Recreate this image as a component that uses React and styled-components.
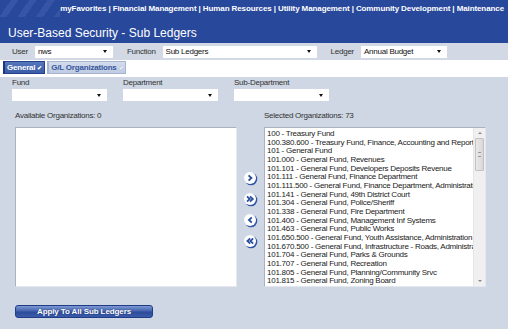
import React from 'react';
import styled, {createGlobalStyle} from 'styled-components';

const GlobalStyle = createGlobalStyle`
    body {
        margin: 0;
        font-family: "Liberation Sans", Arial, sans-serif;
    }
`

const Page = styled.div`
    width: 508px;
    height: 329px;
    display: flex;
    flex-direction: column;
    overflow: hidden;
    background: #ced7e3;
`

const Header = styled.div`
    background: #28489b;
    height: 43px;
    display: flex;
    flex-direction: column;
`

const MenuBar = styled.div`
    height: 17px;
    display: flex;
    align-items: center;
`

const Stripes = styled.div`
    width: 64px;
    height: 100%;
    background: repeating-linear-gradient(125deg, #28489b 0 9px, #3655a7 9px 15px);
`

const MenuText = styled.div`
    flex: 1;
    text-align: right;
    padding-right: 4px;
    color: white;
    font-weight: bold;
    font-size: 8px;
    letter-spacing: -0.1px;
    white-space: nowrap;
`

const Title = styled.div`
    flex: 1;
    display: flex;
    align-items: center;
    padding: 5px 0 0 8px;
    color: white;
    font-size: 12px;
`

const FilterRow = styled.div`
    height: 17px;
    background: #d2d9e4;
    display: flex;
    align-items: center;
    padding-left: 12px;
    gap: 14px;
`

const FilterGroup = styled.div`
    display: flex;
    align-items: center;
    gap: 7px;
`

const Label = styled.div`
    font-size: 8px;
    letter-spacing: -0.25px;
    color: #333;
    line-height: 10px;
    white-space: nowrap;
`

const Select = styled.div`
    width: ${p => p.w}px;
    height: 12px;
    background: white;
    box-sizing: border-box;
    display: flex;
    align-items: center;
    padding: 0 6px 0 3px;
    font-size: 8px;
    letter-spacing: -0.25px;
    color: #111;
    &::after {
        content: '';
        margin-left: auto;
        border-left: 2.5px solid transparent;
        border-right: 2.5px solid transparent;
        border-top: 3px solid #111;
    }
`

const TabRow = styled.div`
    height: 17px;
    background: white;
    display: flex;
    align-items: flex-start;
    padding: 1px 0 0 3px;
    box-sizing: border-box;
    gap: 2px;
`

const Tab = styled.div`
    height: 13px;
    box-sizing: border-box;
    display: flex;
    align-items: center;
    padding: 0 2px 0 2px;
    font-size: 8px;
    font-weight: bold;
    letter-spacing: -0.2px;
    white-space: nowrap;
    border: 1px solid ${p => p.active ? '#24418b' : '#a6b5d2'};
    border-left: 2px solid ${p => p.active ? '#1d3677' : '#a6b5d2'};
    color: ${p => p.active ? 'white' : '#36569c'};
    background: ${p => p.active
        ? 'linear-gradient(#5677bb, #3a5ba6)'
        : 'linear-gradient(#d3dcec, #bfcbe2)'};
`

const Check = styled.span`
    margin-left: 2px;
    font-size: 6px;
    color: ${p => p.active ? 'white' : '#f4f6fb'};
    text-shadow: ${p => p.active ? 'none' : '0 0 1px #8a9cc4'};
`

const Content = styled.div`
    flex: 1;
    padding: 1px 0 0 12px;
`

const FundRow = styled.div`
    display: flex;
    gap: 16px;
`

const FundGroup = styled.div`
    display: flex;
    flex-direction: column;
    gap: 1px;
`

const OrgArea = styled.div`
    display: flex;
    margin: 10px 0 0 3px;
`

const OrgColumn = styled.div`
    display: flex;
    flex-direction: column;
    gap: 6px;
`

const ListBox = styled.div`
    width: 222px;
    height: 160px;
    box-sizing: border-box;
    background: white;
    border: 1px solid #e4e8ee;
    border-top-color: #a9b2bf;
    border-left-color: #a9b2bf;
    display: flex;
    overflow: hidden;
`

const Items = styled.div`
    flex: 1;
    min-width: 0;
    padding: 2px 0 0 2px;
    overflow: hidden;
`

const Item = styled.div`
    font-size: 8px;
    letter-spacing: -0.25px;
    line-height: 8.65px;
    color: #1a1a1a;
    white-space: nowrap;
`

const ScrollBar = styled.div`
    width: 11px;
    background: #f0f0f0;
    border-left: 1px solid #e6e6e6;
    display: flex;
    flex-direction: column;
    align-items: center;
`

const ScrollArrow = styled.div`
    height: 10px;
    width: 100%;
    display: flex;
    align-items: center;
    justify-content: center;
    &::after {
        content: '';
        border-left: 2px solid transparent;
        border-right: 2px solid transparent;
        ${p => p.up ? 'border-bottom: 2px solid #888;' : 'border-top: 2px solid #888;'}
    }
`

const Thumb = styled.div`
    width: 9px;
    height: 33px;
    box-sizing: border-box;
    background: linear-gradient(90deg, #e9e9e9, #d8d8d8);
    border: 1px solid #c2c2c2;
    border-radius: 1px;
    display: flex;
    align-items: center;
    justify-content: center;
    &::after {
        content: '';
        width: 3px;
        height: 3px;
        border-top: 1px solid #999;
        border-bottom: 1px solid #999;
    }
`

const Track = styled.div`
    flex: 1;
`

const ArrowCol = styled.div`
    width: 27px;
    display: flex;
    flex-direction: column;
    align-items: center;
    gap: 6px;
    padding: 60px 1px 0 0;
    box-sizing: border-box;
`

const ApplyButton = styled.div`
    width: 138px;
    height: 13px;
    margin: 18px 0 0 3px;
    box-sizing: border-box;
    border: 1px solid #1f3c86;
    border-radius: 3px;
    background: linear-gradient(#7d98d2 0%, #4464ae 45%, #2c4b9a 55%, #3b5aa8 100%);
    color: white;
    font-size: 8px;
    font-weight: bold;
    letter-spacing: -0.1px;
    display: flex;
    align-items: center;
    justify-content: center;
    text-shadow: 0 0 1px #1a2f66;
`

function ArrowButton({dir, double}){
    const s = dir === 'right' ? 1 : -1;
    const chev = (x) => `M${7.2 + x - 1.6 * s} 4.4 L${7.2 + x + 1.2 * s} 7 L${7.2 + x - 1.6 * s} 9.6`;
    return (
        <svg width="15" height="15" viewBox="0 0 15 15">
            <circle cx="8" cy="8" r="6.3" fill="#3256a7"/>
            <circle cx="7" cy="7" r="6" fill="white"/>
            {double ? (
                <>
                    <path d={chev(-1.6)} stroke="#2b4f9f" strokeWidth="1.8" fill="none"/>
                    <path d={chev(1.4)} stroke="#2b4f9f" strokeWidth="1.8" fill="none"/>
                </>
            ) : (
                <path d={chev(0)} stroke="#2b4f9f" strokeWidth="1.9" fill="none"/>
            )}
        </svg>
    )
}

const selected = [
    "100 - Treasury Fund",
    "100.380.600 - Treasury Fund, Finance, Accounting and Reporting",
    "101 - General Fund",
    "101.000 - General Fund, Revenues",
    "101.101 - General Fund, Developers Deposits Revenue",
    "101.111 - General Fund, Finance Department",
    "101.111.500 - General Fund, Finance Department, Administration",
    "101.141 - General Fund, 49th District Court",
    "101.304 - General Fund, Police/Sheriff",
    "101.338 - General Fund, Fire Department",
    "101.400 - General Fund, Management Inf Systems",
    "101.463 - General Fund, Public Works",
    "101.650.500 - General Fund, Youth Assistance, Administration",
    "101.670.500 - General Fund, Infrastructure - Roads, Administration",
    "101.704 - General Fund, Parks & Grounds",
    "101.707 - General Fund, Recreation",
    "101.805 - General Fund, Planning/Community Srvc",
    "101.815 - General Fund, Zoning Board",
];

function App(){
    return (
        <>
            <GlobalStyle/>
            <Page>
                <Header>
                    <MenuBar>
                        <Stripes/>
                        <MenuText>myFavorites | Financial Management | Human Resources | Utility Management | Community Development | Maintenance</MenuText>
                    </MenuBar>
                    <Title>User-Based Security - Sub Ledgers</Title>
                </Header>

                <FilterRow>
                    <FilterGroup>
                        <Label>User</Label>
                        <Select w={78}>nws</Select>
                    </FilterGroup>
                    <FilterGroup>
                        <Label>Function</Label>
                        <Select w={154}>Sub Ledgers</Select>
                    </FilterGroup>
                    <FilterGroup>
                        <Label>Ledger</Label>
                        <Select w={86}>Annual Budget</Select>
                    </FilterGroup>
                </FilterRow>

                <TabRow>
                    <Tab active>General<Check active>✔</Check></Tab>
                    <Tab>G/L Organizations<Check>✔</Check></Tab>
                </TabRow>

                <Content>
                    <FundRow>
                        <FundGroup>
                            <Label>Fund</Label>
                            <Select w={95}/>
                        </FundGroup>
                        <FundGroup>
                            <Label>Department</Label>
                            <Select w={95}/>
                        </FundGroup>
                        <FundGroup>
                            <Label>Sub-Department</Label>
                            <Select w={95}/>
                        </FundGroup>
                    </FundRow>

                    <OrgArea>
                        <OrgColumn>
                            <Label>Available Organizations: 0</Label>
                            <ListBox/>
                        </OrgColumn>
                        <ArrowCol>
                            <ArrowButton dir="right"/>
                            <ArrowButton dir="right" double/>
                            <ArrowButton dir="left"/>
                            <ArrowButton dir="left" double/>
                        </ArrowCol>
                        <OrgColumn>
                            <Label>Selected Organizations: 73</Label>
                            <ListBox>
                                <Items>
                                    {selected.map(org => <Item key={org}>{org}</Item>)}
                                </Items>
                                <ScrollBar>
                                    <ScrollArrow up/>
                                    <Thumb/>
                                    <Track/>
                                    <ScrollArrow/>
                                </ScrollBar>
                            </ListBox>
                        </OrgColumn>
                    </OrgArea>

                    <ApplyButton>Apply To All Sub Ledgers</ApplyButton>
                </Content>
            </Page>
        </>
    )
}

export default App;
